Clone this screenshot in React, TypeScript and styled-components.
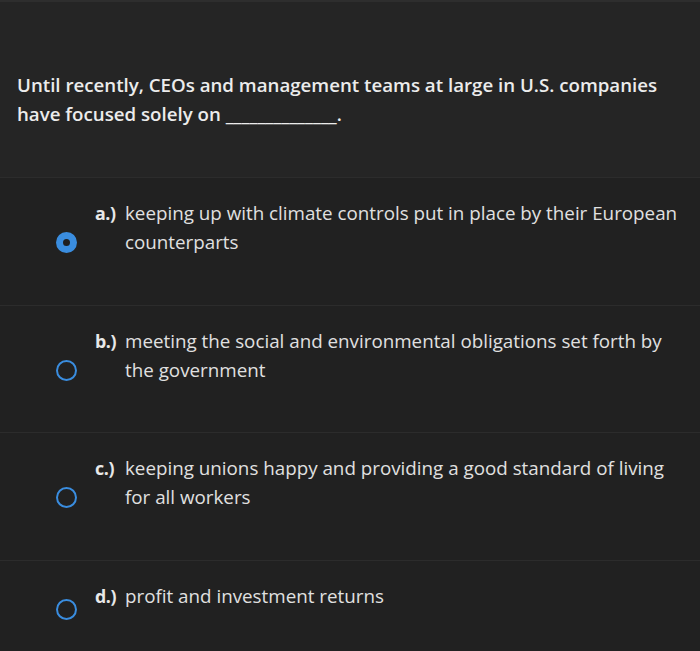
import React, { useState } from 'react';
import styled, { createGlobalStyle } from 'styled-components';

const GlobalStyle = createGlobalStyle`
  html, body {
    margin: 0;
    padding: 0;
    background: #212121;
  }
  body {
    font-family: "Open Sans", "Noto Sans", sans-serif;
    -webkit-font-smoothing: antialiased;
  }
`;

interface IOption {
  id: string;
  label: string;
  text: string;
}

const options: IOption[] = [
  { id: 'a', label: 'a.)', text: 'keeping up with climate controls put in place by their European counterparts' },
  { id: 'b', label: 'b.)', text: 'meeting the social and environmental obligations set forth by the government' },
  { id: 'c', label: 'c.)', text: 'keeping unions happy and providing a good standard of living for all workers' },
  { id: 'd', label: 'd.)', text: 'profit and investment returns' },
];

const Page = styled.div`
  width: 700px;
  height: 651px;
  overflow: hidden;
  background: #212121;
  border-top: 2px solid #2e2e2e;
`;

const Question = styled.div`
  background: #252525;
  height: 176px;
  box-sizing: border-box;
  padding: 68px 20px 0 17px;
  border-bottom: 1px solid #2c2c2c;
  color: #ececec;
  font-size: 18.7px;
  font-weight: 600;
  line-height: 29px;
`;

const Option = styled.div<{ $last?: boolean }>`
  display: flex;
  box-sizing: border-box;
  height: ${p => (p.$last ? '91px' : '127.5px')};
  padding: ${p => (p.$last ? '21.5px 20px 0 56px' : '0 20px 0 56px')};
  align-items: ${p => (p.$last ? 'flex-start' : 'center')};
  border-bottom: ${p => (p.$last ? 'none' : '1px solid #2c2c2c')};
  cursor: pointer;
`;

const Radio = styled.span<{ $checked: boolean; $last?: boolean }>`
  flex: none;
  box-sizing: border-box;
  width: 21px;
  height: 21px;
  border-radius: 50%;
  border: ${p => (p.$checked ? '7px solid #3a8ddf' : '2px solid #3a8ddf')};
  background: ${p => (p.$checked ? '#1f1f1f' : 'transparent')};
  margin-top: ${p => (p.$last ? '17px' : '3px')};
  margin-right: 18px;
`;

const Body = styled.div<{ $last?: boolean }>`
  display: flex;
  align-items: flex-start;
  line-height: 29px;
  margin-bottom: ${p => (p.$last ? '0' : '26px')};
`;

const Label = styled.span`
  flex: none;
  width: 30px;
  color: #e8e8e8;
  font-size: 17.8px;
  font-weight: 700;
  letter-spacing: -0.4px;
`;

const Text = styled.span`
  color: #e0e0e0;
  font-size: 18.8px;
  font-weight: 400;
`;

function App() {
  const [selected, setSelected] = useState('a');

  return (
    <Page>
      <GlobalStyle />
      <Question>
        Until recently, CEOs and management teams at large in U.S. companies have focused solely on ______________.
      </Question>
      {options.map((opt, i) => {
        const last = i === options.length - 1;
        return (
          <Option key={opt.id} $last={last} onClick={() => setSelected(opt.id)}>
            <Radio $checked={selected === opt.id} $last={last} />
            <Body $last={last}>
              <Label>{opt.label}</Label>
              <Text>{opt.text}</Text>
            </Body>
          </Option>
        );
      })}
    </Page>
  );
}

export default App;
